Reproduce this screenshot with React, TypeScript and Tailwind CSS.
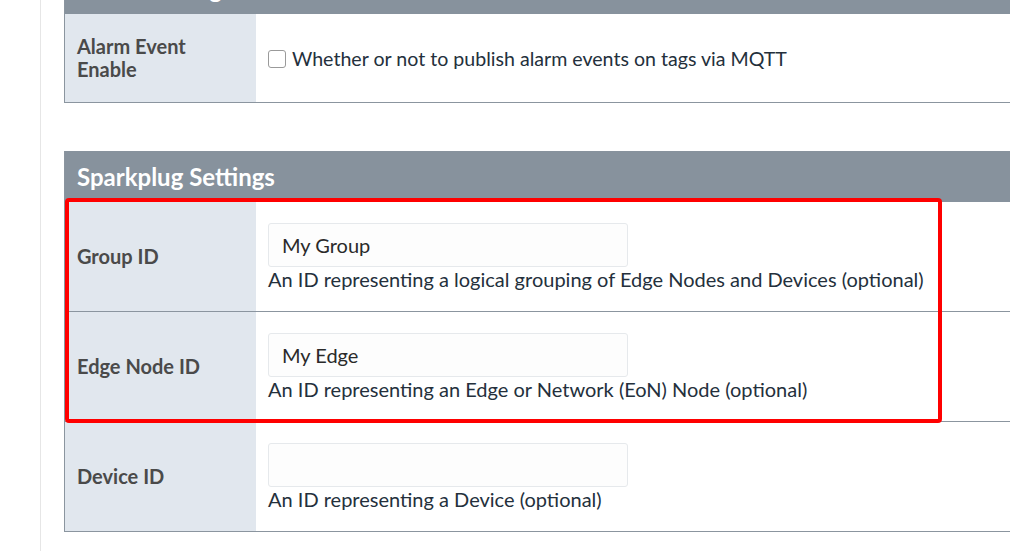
import React from "react";

const font = { fontFamily: '"Lato", "Source Sans Pro", "Liberation Sans", sans-serif' };

function Row({
  label,
  children,
  last,
}: {
  label: React.ReactNode;
  children: React.ReactNode;
  last?: boolean;
}) {
  return (
    <div className={`flex ${last ? "" : "border-b border-[#8b959f]"}`}>
      <div className="w-[191px] shrink-0 bg-[#e1e7ee] flex items-center pl-[12px] pr-[30px] text-[20px] leading-[23px] font-bold text-[#4a4a4a]">
        {label}
      </div>
      <div className="flex-1 bg-white pl-[12px]">{children}</div>
    </div>
  );
}

function TextField({ value, help }: { value: string; help: string }) {
  return (
    <div className="pt-[21px] pb-[20px]">
      <div className="w-[360px] h-[44px] border border-[#e6e9ec] rounded-[3px] bg-[#fdfdfd] flex items-center px-[13px] text-[20px] text-[#2a2a2a]">
        {value}
      </div>
      <div className="text-[20px] leading-[24px] text-[#24303c]">{help}</div>
    </div>
  );
}

export default function App() {
  return (
    <div className="w-[1010px] h-[551px] overflow-hidden bg-white flex" style={font}>
      <div className="w-[41px] shrink-0 border-r border-[#e6e6e6]" />

      <div className="flex-1 pl-[23px] relative">
        {/* previous table, scrolled partly out of view */}
        <div className="w-[1000px] border-l border-b border-[#8b959f] mt-[-37px]">
          <div className="h-[51px] bg-[#87929d] flex items-center px-[12px] text-[24px] font-bold text-white">
            Alarm Settings
          </div>
          <Row label="Alarm Event Enable" last>
            <div className="h-[88px] flex items-center gap-[6px] pt-[1px]">
              <span className="w-[18px] h-[18px] border border-[#9a9a9a] rounded-[3px] bg-white" />
              <span className="text-[19.6px] text-[#24303c]">
                Whether or not to publish alarm events on tags via MQTT
              </span>
            </div>
          </Row>
        </div>

        {/* Sparkplug table */}
        <div className="w-[1000px] border-l border-b border-[#8b959f] mt-[48px]">
          <div className="h-[51px] bg-[#87929d] flex items-center px-[12px] text-[24px] font-bold text-white">
            Sparkplug Settings
          </div>
          <Row label="Group ID">
            <TextField
              value="My Group"
              help="An ID representing a logical grouping of Edge Nodes and Devices (optional)"
            />
          </Row>
          <Row label="Edge Node ID">
            <TextField
              value="My Edge"
              help="An ID representing an Edge or Network (EoN) Node (optional)"
            />
          </Row>
          <Row label="Device ID" last>
            <TextField value="" help="An ID representing a Device (optional)" />
          </Row>
        </div>

        {/* highlight annotation */}
        <div className="absolute left-[24px] top-[198px] w-[877px] h-[225px] border-4 border-[#ff0000] rounded-[4px] pointer-events-none" />
      </div>
    </div>
  );
}
